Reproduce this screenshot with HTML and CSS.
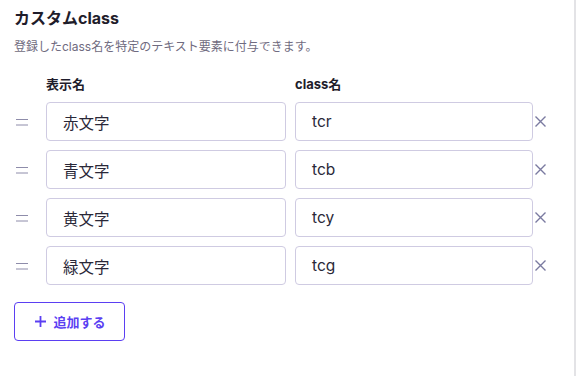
FILE: index.html
```html
<!DOCTYPE html>
<html lang="ja">
<head>
<meta charset="utf-8">
<title>カスタムclass</title>
<link rel="stylesheet" href="styles.css">
</head>
<body>
<div class="panel">
  <h2 class="title">カスタムclass</h2>
  <p class="desc">登録したclass名を特定のテキスト要素に付与できます。</p>
  <div class="head">
    <span class="h-name">表示名</span>
    <span class="h-class">class名</span>
  </div>
  <div class="rows">
    <div class="row">
      <span class="handle"><svg width="12" height="8" viewBox="0 0 12 8"><path d="M0 1.5H12M0 7H12" stroke="currentColor" stroke-width="1"/></svg></span>
      <div class="field name">赤文字</div>
      <div class="field cls">tcr</div>
      <span class="del"><svg width="11" height="11" viewBox="0 0 11 11"><path d="M0.5 0.5L10.5 10.5M10.5 0.5L0.5 10.5" stroke="currentColor" stroke-width="1.4"/></svg></span>
    </div>
    <div class="row">
      <span class="handle"><svg width="12" height="8" viewBox="0 0 12 8"><path d="M0 1.5H12M0 7H12" stroke="currentColor" stroke-width="1"/></svg></span>
      <div class="field name">青文字</div>
      <div class="field cls">tcb</div>
      <span class="del"><svg width="11" height="11" viewBox="0 0 11 11"><path d="M0.5 0.5L10.5 10.5M10.5 0.5L0.5 10.5" stroke="currentColor" stroke-width="1.4"/></svg></span>
    </div>
    <div class="row">
      <span class="handle"><svg width="12" height="8" viewBox="0 0 12 8"><path d="M0 1.5H12M0 7H12" stroke="currentColor" stroke-width="1"/></svg></span>
      <div class="field name">黄文字</div>
      <div class="field cls">tcy</div>
      <span class="del"><svg width="11" height="11" viewBox="0 0 11 11"><path d="M0.5 0.5L10.5 10.5M10.5 0.5L0.5 10.5" stroke="currentColor" stroke-width="1.4"/></svg></span>
    </div>
    <div class="row">
      <span class="handle"><svg width="12" height="8" viewBox="0 0 12 8"><path d="M0 1.5H12M0 7H12" stroke="currentColor" stroke-width="1"/></svg></span>
      <div class="field name">緑文字</div>
      <div class="field cls">tcg</div>
      <span class="del"><svg width="11" height="11" viewBox="0 0 11 11"><path d="M0.5 0.5L10.5 10.5M10.5 0.5L0.5 10.5" stroke="currentColor" stroke-width="1.4"/></svg></span>
    </div>
  </div>
  <button class="add"><svg width="11" height="11" viewBox="0 0 11 11"><path d="M5.5 0V11M0 5.5H11" stroke="currentColor" stroke-width="1.8"/></svg><span>追加する</span></button>
</div>
</body>
</html>
```

FILE: styles.css
```css
* { box-sizing: border-box; }
html, body { margin: 0; padding: 0; background: #ffffff; }
body {
  font-family: "Inter", "Noto Sans CJK JP", sans-serif;
  color: #1f1d2b;
}
.panel {
  width: 576px;
  height: 376px;
  padding: 6px 0 0 14px;
  border-right: 2px solid #e3e3e6;
}
.title {
  margin: 0;
  font-size: 16px;
  line-height: 24px;
  font-weight: 700;
  color: #1f1d2b;
}
.desc {
  margin: 8px 0 0;
  font-size: 12px;
  line-height: 18px;
  color: #6f6b80;
}
.head {
  display: flex;
  margin-top: 18px;
  padding-left: 32px;
  font-size: 13px;
  line-height: 20px;
  font-weight: 700;
  color: #1f1d2b;
}
.h-name { width: 249px; }
.rows {
  display: flex;
  flex-direction: column;
  gap: 9px;
  margin-top: 8px;
}
.row {
  display: flex;
  align-items: center;
  height: 39px;
}
.handle {
  width: 32px;
  padding-left: 2px;
  display: flex;
  align-items: center;
  color: #8e8caa;
}
.field {
  height: 39px;
  border: 1px solid #cfcbe2;
  border-radius: 4px;
  padding-left: 16px;
  display: flex;
  align-items: center;
  font-size: 15.5px;
  color: #2a2838;
}
.name { width: 240px; margin-right: 9px; }
.cls { width: 238px; }
.del {
  display: flex;
  align-items: center;
  padding-left: 2px;
  color: #7a7aa0;
}
.add {
  margin-top: 17px;
  width: 111px;
  height: 39px;
  border: 1px solid #5b3ff2;
  border-radius: 4px;
  background: #ffffff;
  color: #5b3ff2;
  font-family: "Inter", "Noto Sans CJK JP", sans-serif;
  font-size: 13px;
  font-weight: 700;
  display: flex;
  align-items: center;
  justify-content: center;
  gap: 7px;
  padding: 0 0 0 2px;
  cursor: pointer;
}
```
